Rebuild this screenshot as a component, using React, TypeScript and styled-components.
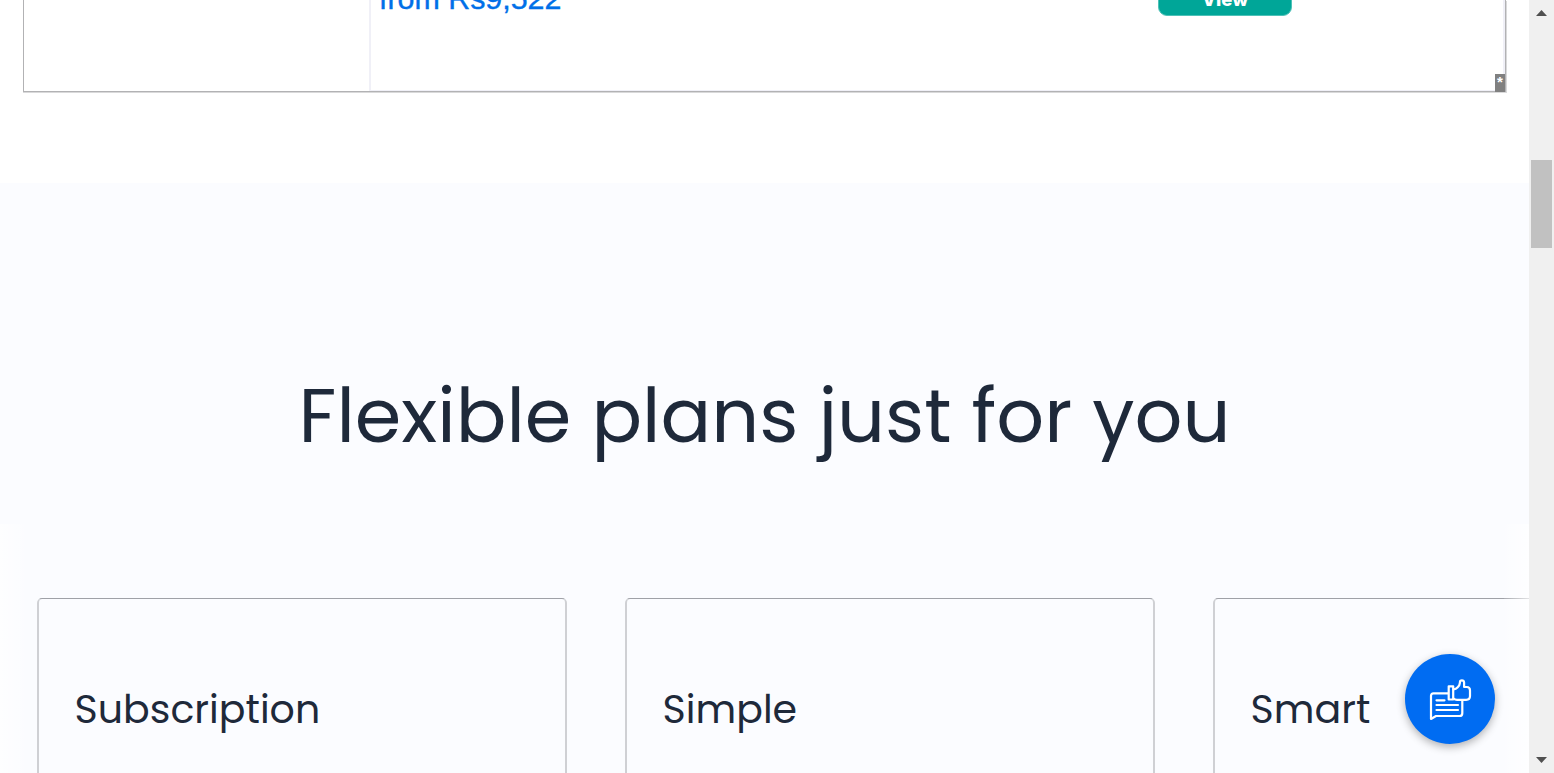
import React from "react";
import styled, { createGlobalStyle } from "styled-components";

const Global = createGlobalStyle`
  * { box-sizing: border-box; }
  body { margin: 0; background: #fff; overflow: hidden; }
`;

const Window = styled.div`
  display: flex;
  width: 1554px;
  height: 773px;
  overflow: hidden;
  position: relative;
`;

const Page = styled.main`
  width: 1529px;
  height: 773px;
  overflow: hidden;
  background: #fff;
  color: #1e293a;
  font-family: Poppins, Inter, sans-serif;
`;

const DealSection = styled.section`
  height: 183px;
  padding: 0 23px;
`;

const DealFrame = styled.div`
  position: relative;
  display: flex;
  height: 92px;
  border: solid #b2b2b4;
  border-width: 0 1px 1px;
  box-shadow: 0 1px 0 #d9d9da, 1px 1px 0 #d9d9da;
`;

const LogoColumn = styled.div`
  width: 347px;
  border-right: 2px solid #f0f0f7;
`;

const DealBody = styled.div`
  flex: 1;
  display: flex;
  justify-content: space-between;
  align-items: flex-start;
  padding: 0 211px 0 8px;
  border-right: 2px solid #f0f0f7;
  border-bottom: 1px solid #f0f0f7;
`;

const Price = styled.div`
  margin-top: -19px;
  font: 30.4px/34px "Liberation Sans", sans-serif;
  color: #006fe8;
  -webkit-text-stroke: 0.4px #006fe8;
`;

const ViewButton = styled.button`
  width: 134px;
  height: 36px;
  margin-top: -20px;
  padding: 0;
  border: 1px solid #4dc1b7;
  border-radius: 9px;
  background: #00a698;
  color: #fff;
  font: 800 18.5px/36px Inter, sans-serif;
`;

const Star = styled.span`
  position: absolute;
  right: 0;
  bottom: -1px;
  width: 10px;
  height: 18px;
  background: #808080;
  color: #fff;
  text-align: center;
  font: bold 15px/15px "Liberation Sans", sans-serif;
`;

const PlansSection = styled.section`
  height: 590px;
  padding-top: 183px;
  background: #fbfcff;
`;

const Title = styled.h2`
  height: 110px;
  margin: 0;
  font-size: 75px;
  font-weight: 400;
  line-height: 99px;
  text-align: center;
`;

const Carousel = styled.div`
  position: relative;
  display: flex;
  gap: 58px;
  height: 249px;
  margin-top: 48px;
  padding: 74px 0 0 37px;
`;

const PlanCard = styled.article`
  flex: none;
  width: 530px;
  height: 300px;
  padding: 82px 35.6px;
  border: solid #9fa1a7;
  border-width: 1px 2px;
  border-color: #9fa1a7 #cfd0d4;
  border-radius: 5px;
`;

const PlanName = styled.h3`
  margin: 0;
  font-size: 39.5px;
  font-weight: 400;
  line-height: 58px;
`;

const EdgeFade = styled.span<{ $side: "left" | "right" }>`
  position: absolute;
  top: 0;
  bottom: 0;
  ${(p) => p.$side}: 0;
  width: 25px;
  background: linear-gradient(to ${(p) => p.$side}, rgba(255, 255, 255, 0.1), rgba(255, 255, 255, 0.7));
`;

const Scrollbar = styled.aside`
  display: flex;
  flex-direction: column;
  justify-content: space-between;
  align-items: center;
  width: 25px;
  padding: 10px 0;
  background: #f0f0f0;
`;

const Arrow = styled.svg`
  display: block;
  width: 11px;
  height: 6px;
  fill: #505050;
`;

const Thumb = styled.div`
  width: 21px;
  height: 88px;
  margin: 144px 0 auto;
  background: #c1c1c1;
`;

const FeedbackButton = styled.button`
  position: absolute;
  left: 1405px;
  top: 654px;
  display: grid;
  place-items: center;
  width: 90px;
  height: 90px;
  padding: 0;
  border: 0;
  border-radius: 50%;
  background: #006cf2;
  box-shadow: 0 3px 8px rgba(0, 0, 0, 0.3);
`;

const plans = ["Subscription", "Simple", "Smart"];

export default function App() {
  return (
    <Window>
      <Global />
      <Page>
        <DealSection>
          <DealFrame>
            <LogoColumn />
            <DealBody>
              <Price>from Rs9,522</Price>
              <ViewButton>View</ViewButton>
            </DealBody>
            <Star>*</Star>
          </DealFrame>
        </DealSection>
        <PlansSection>
          <Title>Flexible plans just for you</Title>
          <Carousel>
            {plans.map((name) => (
              <PlanCard key={name}>
                <PlanName>{name}</PlanName>
              </PlanCard>
            ))}
            <EdgeFade $side="left" />
            <EdgeFade $side="right" />
          </Carousel>
        </PlansSection>
      </Page>
      <Scrollbar>
        <Arrow viewBox="0 0 11 6"><path d="M0 6 5.500 0 11 6z" /></Arrow>
        <Thumb />
        <Arrow viewBox="0 0 11 6"><path d="M0 0h11L5.500 6z" /></Arrow>
      </Scrollbar>
      <FeedbackButton aria-label="Feedback">
        <svg width="44" height="44" viewBox="0 0 44 44" fill="none" stroke="#fff" strokeWidth="2.200" strokeLinejoin="round" strokeLinecap="round">
          <path d="M20 16.300H5.500q-2.500 0-2.500 2.500V42l5-3h23.500q2.800 0 2.800-2.800V23.500" />
          <path d="M8.500 23.300h8M8.500 28h21.500M8.500 33h21.500" />
          <path d="M20.700 9.300h4.500v13.200h-4.500z" />
          <path d="M25.500 12.300q2.500 0 4.200-2 2-2 2.200-4.500V5.500q0-2.200 2-2.200t2.200 2.200V10h2.700q3.200 0 3.200 3.500v5.500q0 3.800-3.800 3.800H29q-2 0-3.500-1.300" />
        </svg>
      </FeedbackButton>
    </Window>
  );
}
